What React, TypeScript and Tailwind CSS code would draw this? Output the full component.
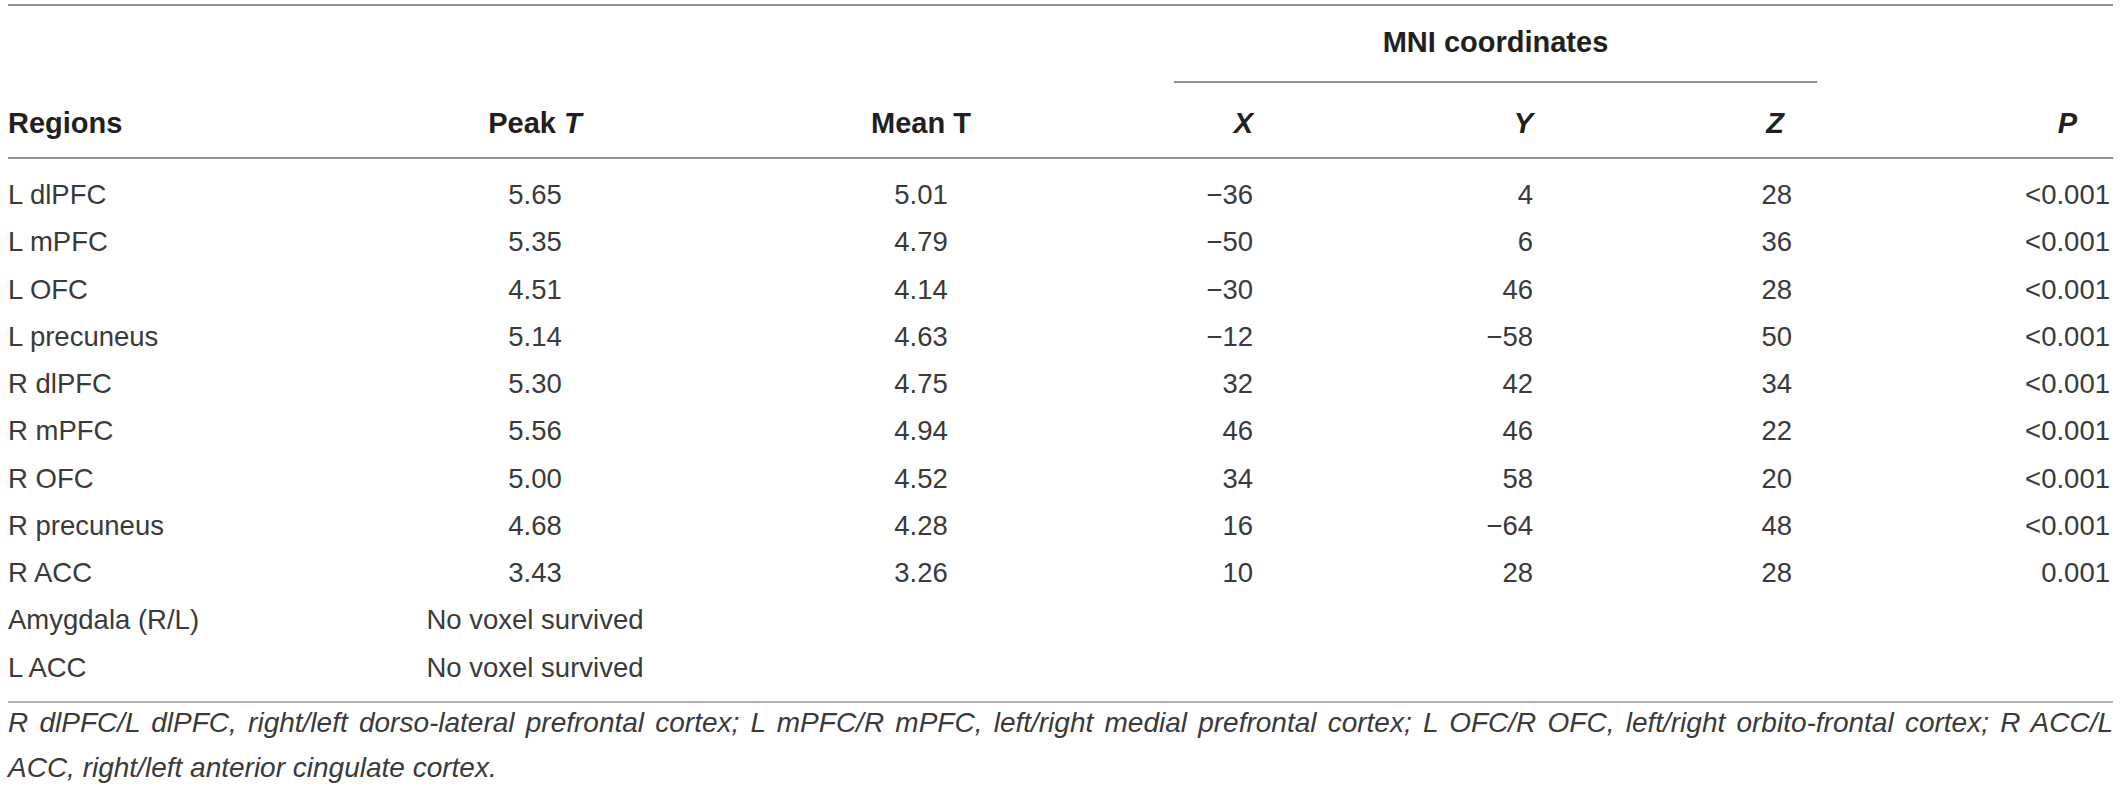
const cols = 'grid grid-cols-[332px_390px_382px_148px_280px_277px_296px]';

type Row = {
  region: string;
  peak?: string;
  mean?: string;
  x?: string;
  y?: string;
  z?: string;
  p?: string;
};

const rows: Row[] = [
  { region: 'L dlPFC', peak: '5.65', mean: '5.01', x: '−36', y: '4', z: '28', p: '<0.001' },
  { region: 'L mPFC', peak: '5.35', mean: '4.79', x: '−50', y: '6', z: '36', p: '<0.001' },
  { region: 'L OFC', peak: '4.51', mean: '4.14', x: '−30', y: '46', z: '28', p: '<0.001' },
  { region: 'L precuneus', peak: '5.14', mean: '4.63', x: '−12', y: '−58', z: '50', p: '<0.001' },
  { region: 'R dlPFC', peak: '5.30', mean: '4.75', x: '32', y: '42', z: '34', p: '<0.001' },
  { region: 'R mPFC', peak: '5.56', mean: '4.94', x: '46', y: '46', z: '22', p: '<0.001' },
  { region: 'R OFC', peak: '5.00', mean: '4.52', x: '34', y: '58', z: '20', p: '<0.001' },
  { region: 'R precuneus', peak: '4.68', mean: '4.28', x: '16', y: '−64', z: '48', p: '<0.001' },
  { region: 'R ACC', peak: '3.43', mean: '3.26', x: '10', y: '28', z: '28', p: '0.001' },
  { region: 'Amygdala (R/L)' },
  { region: 'L ACC' },
];

function BodyRow({ row }: { row: Row }) {
  const empty = !row.peak;
  return (
    <div className={`${cols} h-[47.25px] leading-[47.25px] text-[27.5px] text-[#3a3a3a]`}>
      <div className="whitespace-nowrap">{row.region}</div>
      <div className="text-center whitespace-nowrap">{empty ? 'No voxel survived' : row.peak}</div>
      <div className="text-center">{row.mean}</div>
      <div className="text-right pr-[7px]">{row.x}</div>
      <div className="text-right pr-[7px]">{row.y}</div>
      <div className="text-right pr-[25px]">{row.z}</div>
      <div className="text-right pr-[3px]">{row.p}</div>
    </div>
  );
}

export default function App() {
  return (
    <div className="w-[2120px] min-h-[789px] bg-white pt-1 font-['Liberation_Sans',Arial,sans-serif]">
      <div className="ml-2 w-[2105px]">
        <div className="h-[2px] bg-[#8f8f8f]" />

        {/* MNI group header */}
        <div className={cols}>
          <div className="col-start-4 col-span-3 pl-[62px]">
            <div className="mt-[16px] h-[40px] leading-[40px] text-center text-[29px] font-bold text-[#231f20]">
              MNI coordinates
            </div>
            <div className="mt-[19px] h-[2px] bg-[#8f8f8f]" />
          </div>
        </div>

        <div className={`${cols} pt-[20px] pb-[14px] h-[74px] leading-[40px] text-[29px] font-bold text-[#231f20]`}>
          <div>Regions</div>
          <div className="text-center">
            Peak <i>T</i>
          </div>
          <div className="text-center">Mean T</div>
          <div className="text-right pr-[7px] italic">X</div>
          <div className="text-right pr-[7px] italic">Y</div>
          <div className="text-right pr-[33px] italic">Z</div>
          <div className="text-right pr-[36px] italic">P</div>
        </div>
        <div className="h-[2px] bg-[#8f8f8f]" />

        <div className="pt-[12px] pb-[10px]">
          {rows.map((r) => (
            <BodyRow key={r.region} row={r} />
          ))}
        </div>
        <div className="h-[2px] bg-[#b0b0b0]" />

        <div className="-mt-[3px] text-[28px] leading-[45px] italic text-[#3a3a3a]">
          <p className="text-justify [text-align-last:justify]">
            R dlPFC/L dlPFC, right/left dorso-lateral prefrontal cortex; L mPFC/R mPFC, left/right medial prefrontal
            cortex; L OFC/R OFC, left/right orbito-frontal cortex; R ACC/L
          </p>
          <p>ACC, right/left anterior cingulate cortex.</p>
        </div>
      </div>
    </div>
  );
}
